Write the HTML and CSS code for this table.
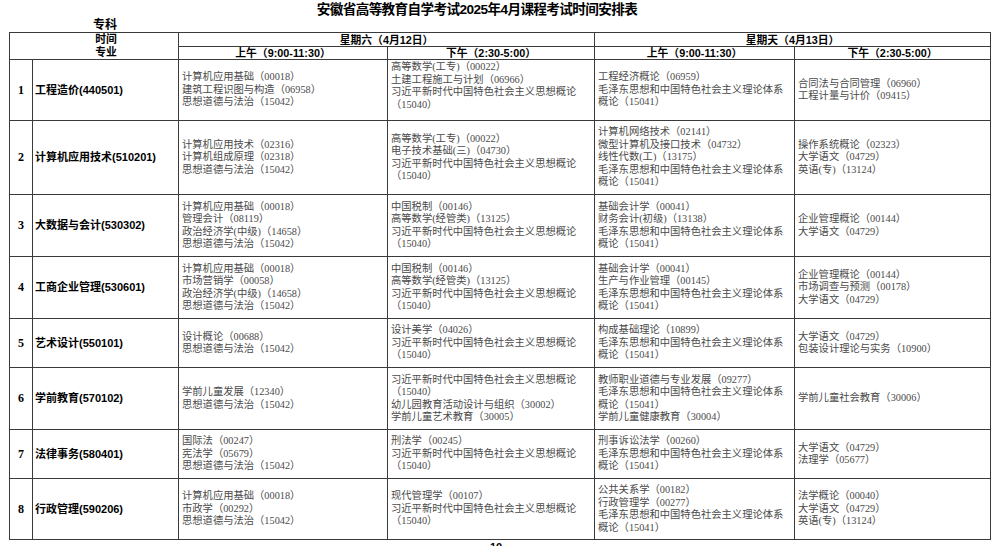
FILE: index.html
```html
<!DOCTYPE html>
<html lang="zh-CN">
<head>
<meta charset="utf-8">
<title>安徽省高等教育自学考试2025年4月课程考试时间安排表</title>
<link rel="stylesheet" href="styles.css">
</head>
<body>
<div class="page">
  <h1 class="title">安徽省高等教育自学考试2025年4月课程考试时间安排表</h1>
  <div class="level">专科</div>
  <table class="sched">
    <colgroup>
      <col class="c-no"><col class="c-major"><col class="c-sa"><col class="c-sp"><col class="c-ua"><col class="c-up">
    </colgroup>
    <thead>
      <tr class="h-day">
        <th colspan="2" rowspan="2" class="corner"><div>时间</div><div>专业</div></th>
        <th colspan="2">星期六（4月12日）</th>
        <th colspan="2">星期天（4月13日）</th>
      </tr>
      <tr class="h-half">
        <th>上午（9:00-11:30）</th>
        <th>下午（2:30-5:00）</th>
        <th>上午（9:00-11:30）</th>
        <th>下午（2:30-5:00）</th>
      </tr>
    </thead>
    <tbody>
      <tr class="r61">
        <td class="no">1</td><td class="major">工程造价(440501)</td>
        <td><div>计算机应用基础（00018）</div><div>建筑工程识图与构造（06958）</div><div>思想道德与法治（15042）</div></td>
        <td class="top"><div>高等数学(工专)（00022）</div><div>土建工程施工与计划（06966）</div><div>习近平新时代中国特色社会主义思想概论</div><div>（15040）</div></td>
        <td><div>工程经济概论（06959）</div><div>毛泽东思想和中国特色社会主义理论体系</div><div>概论（15041）</div></td>
        <td><div>合同法与合同管理（06960）</div><div>工程计量与计价（09415）</div></td>
      </tr>
      <tr class="r74">
        <td class="no">2</td><td class="major">计算机应用技术(510201)</td>
        <td><div>计算机应用技术（02316）</div><div>计算机组成原理（02318）</div><div>思想道德与法治（15042）</div></td>
        <td><div>高等数学(工专)（00022）</div><div>电子技术基础(三)（04730）</div><div>习近平新时代中国特色社会主义思想概论</div><div>（15040）</div></td>
        <td><div>计算机网络技术（02141）</div><div>微型计算机及接口技术（04732）</div><div>线性代数(工)（13175）</div><div>毛泽东思想和中国特色社会主义理论体系</div><div>概论（15041）</div></td>
        <td><div>操作系统概论（02323）</div><div>大学语文（04729）</div><div>英语(专)（13124）</div></td>
      </tr>
      <tr class="r62">
        <td class="no">3</td><td class="major">大数据与会计(530302)</td>
        <td><div>计算机应用基础（00018）</div><div>管理会计（08119）</div><div>政治经济学(中级)（14658）</div><div>思想道德与法治（15042）</div></td>
        <td><div>中国税制（00146）</div><div>高等数学(经管类)（13125）</div><div>习近平新时代中国特色社会主义思想概论</div><div>（15040）</div></td>
        <td><div>基础会计学（00041）</div><div>财务会计(初级)（13138）</div><div>毛泽东思想和中国特色社会主义理论体系</div><div>概论（15041）</div></td>
        <td><div>企业管理概论（00144）</div><div>大学语文（04729）</div></td>
      </tr>
      <tr class="r62">
        <td class="no">4</td><td class="major">工商企业管理(530601)</td>
        <td><div>计算机应用基础（00018）</div><div>市场营销学（00058）</div><div>政治经济学(中级)（14658）</div><div>思想道德与法治（15042）</div></td>
        <td><div>中国税制（00146）</div><div>高等数学(经管类)（13125）</div><div>习近平新时代中国特色社会主义思想概论</div><div>（15040）</div></td>
        <td><div>基础会计学（00041）</div><div>生产与作业管理（00145）</div><div>毛泽东思想和中国特色社会主义理论体系</div><div>概论（15041）</div></td>
        <td><div>企业管理概论（00144）</div><div>市场调查与预测（00178）</div><div>大学语文（04729）</div></td>
      </tr>
      <tr class="r49">
        <td class="no">5</td><td class="major">艺术设计(550101)</td>
        <td><div>设计概论（00688）</div><div>思想道德与法治（15042）</div></td>
        <td><div>设计美学（04026）</div><div>习近平新时代中国特色社会主义思想概论</div><div>（15040）</div></td>
        <td><div>构成基础理论（10899）</div><div>毛泽东思想和中国特色社会主义理论体系</div><div>概论（15041）</div></td>
        <td><div>大学语文（04729）</div><div>包装设计理论与实务（10900）</div></td>
      </tr>
      <tr class="r62">
        <td class="no">6</td><td class="major">学前教育(570102)</td>
        <td><div>学前儿童发展（12340）</div><div>思想道德与法治（15042）</div></td>
        <td><div>习近平新时代中国特色社会主义思想概论</div><div>（15040）</div><div>幼儿园教育活动设计与组织（30002）</div><div>学前儿童艺术教育（30005）</div></td>
        <td><div>教师职业道德与专业发展（09277）</div><div>毛泽东思想和中国特色社会主义理论体系</div><div>概论（15041）</div><div>学前儿童健康教育（30004）</div></td>
        <td><div>学前儿童社会教育（30006）</div></td>
      </tr>
      <tr class="r49">
        <td class="no">7</td><td class="major">法律事务(580401)</td>
        <td><div>国际法（00247）</div><div>宪法学（05679）</div><div>思想道德与法治（15042）</div></td>
        <td><div>刑法学（00245）</div><div>习近平新时代中国特色社会主义思想概论</div><div>（15040）</div></td>
        <td><div>刑事诉讼法学（00260）</div><div>毛泽东思想和中国特色社会主义理论体系</div><div>概论（15041）</div></td>
        <td><div>大学语文（04729）</div><div>法理学（05677）</div></td>
      </tr>
      <tr class="r61">
        <td class="no">8</td><td class="major">行政管理(590206)</td>
        <td><div>计算机应用基础（00018）</div><div>市政学（00292）</div><div>思想道德与法治（15042）</div></td>
        <td><div>现代管理学（00107）</div><div>习近平新时代中国特色社会主义思想概论</div><div>（15040）</div></td>
        <td><div>公共关系学（00182）</div><div>行政管理学（00277）</div><div>毛泽东思想和中国特色社会主义理论体系</div><div>概论（15041）</div></td>
        <td><div>法学概论（00040）</div><div>大学语文（04729）</div><div>英语(专)（13124）</div></td>
      </tr>
    </tbody>
  </table>
  <div class="pageno">10</div>
</div>
</body>
</html>
```

FILE: styles.css
```css
html, body {
  margin: 0;
  padding: 0;
  background: #ffffff;
}

.page {
  width: 1000px;
  height: 546px;
  overflow: hidden;
  font-family: "Liberation Serif", "Noto Sans CJK SC", serif;
  color: #000;
}

.title {
  margin: 0;
  height: 19px;
  line-height: 20px;
  text-align: center;
  font-family: "Liberation Sans", "Noto Sans CJK SC", sans-serif;
  font-weight: bold;
  font-size: 13.6px;
  letter-spacing: -0.6px;
  padding-right: 46px;
}

.level {
  height: 13px;
  line-height: 12px;
  padding-left: 93px;
  font-family: "Liberation Sans", "Noto Sans CJK SC", sans-serif;
  font-weight: bold;
  font-size: 12px;
}

.sched {
  margin-left: 9px;
  width: 981px;
  table-layout: fixed;
  border-collapse: collapse;
}

.c-no { width: 23px; }
.c-major { width: 146px; }
.c-sa { width: 209px; }
.c-sp { width: 207px; }
.c-ua { width: 200px; }
.c-up { width: 196px; }

.sched th,
.sched td {
  border: 1px solid #3a3a3a;
  padding: 0;
}

.sched th {
  font-family: "Liberation Sans", "Noto Sans CJK SC", sans-serif;
  font-weight: bold;
  font-size: 10.8px;
  line-height: 12px;
  text-align: center;
  vertical-align: middle;
  color: #000;
}

.h-day { height: 14px; }
.h-half { height: 13px; }

.sched th.corner {
  padding-left: 24px;
  line-height: 13px;
}

.sched td {
  vertical-align: middle;
  padding: 0 2px 0 3px;
  font-size: 10.3px;
  line-height: 12.5px;
  color: #4a4a4a;
  white-space: nowrap;
  overflow: hidden;
}

.sched td.top {
  vertical-align: top;
  padding-top: 1px;
}

.sched td.no {
  padding: 0;
  text-align: center;
  font-family: "Liberation Serif", "Noto Sans CJK SC", serif;
  font-weight: bold;
  font-size: 12px;
  color: #000;
}

.sched td.major {
  padding: 0 0 0 2px;
  font-family: "Liberation Sans", "Noto Sans CJK SC", sans-serif;
  font-weight: bold;
  font-size: 11px;
  color: #000;
}

.r61 { height: 61px; }
.r74 { height: 74px; }
.r62 { height: 62px; }
.r49 { height: 49px; }

.pageno {
  margin-top: 1px;
  text-align: center;
  padding-right: 8px;
  font-family: "Liberation Sans", sans-serif;
  font-weight: bold;
  font-size: 11px;
  line-height: 12px;
}
```
